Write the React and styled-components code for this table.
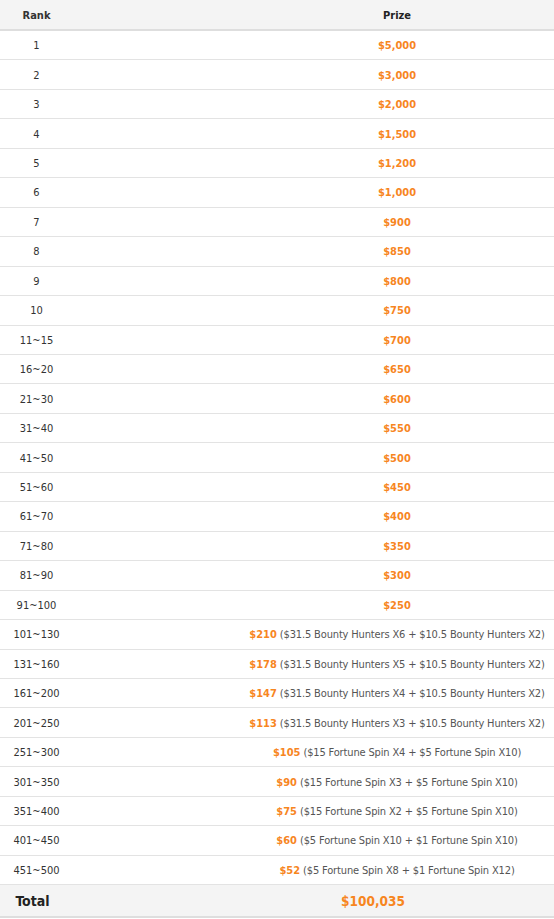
import React from 'react';
import styled, {createGlobalStyle} from 'styled-components';

const GlobalStyle = createGlobalStyle`
    html, body {
        margin: 0;
        padding: 0;
        background: #fff;
    }
    body {
        font-family: "DejaVu Sans Condensed", "DejaVu Sans", Verdana, sans-serif;
        font-stretch: condensed;
        color: #333;
    }
`;

const prizes = [
    ['1', '$5,000'],
    ['2', '$3,000'],
    ['3', '$2,000'],
    ['4', '$1,500'],
    ['5', '$1,200'],
    ['6', '$1,000'],
    ['7', '$900'],
    ['8', '$850'],
    ['9', '$800'],
    ['10', '$750'],
    ['11~15', '$700'],
    ['16~20', '$650'],
    ['21~30', '$600'],
    ['31~40', '$550'],
    ['41~50', '$500'],
    ['51~60', '$450'],
    ['61~70', '$400'],
    ['71~80', '$350'],
    ['81~90', '$300'],
    ['91~100', '$250'],
    ['101~130', '$210', '($31.5 Bounty Hunters X6 + $10.5 Bounty Hunters X2)'],
    ['131~160', '$178', '($31.5 Bounty Hunters X5 + $10.5 Bounty Hunters X2)'],
    ['161~200', '$147', '($31.5 Bounty Hunters X4 + $10.5 Bounty Hunters X2)'],
    ['201~250', '$113', '($31.5 Bounty Hunters X3 + $10.5 Bounty Hunters X2)'],
    ['251~300', '$105', '($15 Fortune Spin X4 + $5 Fortune Spin X10)'],
    ['301~350', '$90', '($15 Fortune Spin X3 + $5 Fortune Spin X10)'],
    ['351~400', '$75', '($15 Fortune Spin X2 + $5 Fortune Spin X10)'],
    ['401~450', '$60', '($5 Fortune Spin X10 + $1 Fortune Spin X10)'],
    ['451~500', '$52', '($5 Fortune Spin X8 + $1 Fortune Spin X12)'],
];

const App = () => {
    return (
        <React.Fragment>
            <GlobalStyle/>
            <Table>
                <HeadRow>
                    <RankCell bold>Rank</RankCell>
                    <PrizeCell bold>Prize</PrizeCell>
                </HeadRow>
                {prizes.map(([rank, amount, detail]) => (
                    <Row key={rank}>
                        <RankCell>{rank}</RankCell>
                        <PrizeCell>
                            <Amount>{amount}</Amount>
                            {detail && <Detail> {detail}</Detail>}
                        </PrizeCell>
                    </Row>
                ))}
                <TotalRow>
                    <RankCell total>Total</RankCell>
                    <PrizeCell>
                        <Amount total>$100,035</Amount>
                    </PrizeCell>
                </TotalRow>
            </Table>
        </React.Fragment>
    )
};

const Table = styled.div`
    width: 554px;
    display: flex;
    flex-direction: column;
`;

const Row = styled.div`
    display: grid;
    grid-template-columns: 73px 167px 1fr;
    align-items: center;
    height: 29.46px;
    padding-top: 1px;
    box-sizing: border-box;
    border-bottom: 1px solid #e3e3e3;
    font-size: 11px;
`;

const HeadRow = styled(Row)`
    height: 31px;
    background: #f4f4f4;
    border-bottom: 2px solid #dedede;
    color: #222;
`;

const TotalRow = styled(Row)`
    grid-template-columns: 65px 127px 1fr;
    height: 34px;
    background: #f4f4f4;
    border-bottom: 2px solid #dedede;
    border-top: 1px solid #e3e3e3;
    margin-top: -1px;
`;

const RankCell = styled.div`
    text-align: center;
    white-space: nowrap;
    font-weight: ${p => (p.bold || p.total) ? 'bold' : 'normal'};
    font-size: ${p => p.total ? '14px' : '11px'};
    color: ${p => p.total ? '#222' : '#333'};
`;

const PrizeCell = styled.div`
    grid-column: 3;
    text-align: center;
    white-space: nowrap;
    font-weight: ${p => p.bold ? 'bold' : 'normal'};
`;

const Amount = styled.span`
    color: #f7861f;
    font-weight: bold;
    font-size: ${p => p.total ? '13.5px' : '11px'};
`;

const Detail = styled.span`
    color: #555;
    letter-spacing: -0.15px;
`;

export default App;
